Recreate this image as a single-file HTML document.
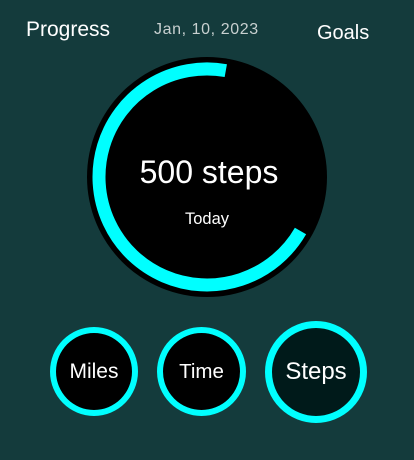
<!DOCTYPE html>
<html><head><style>
body{margin:0;width:414px;height:460px;background:#143b3c;font-family:"Liberation Sans",sans-serif;color:#fff;position:relative;overflow:hidden}
.t{position:absolute;white-space:nowrap}
.c{position:absolute;border-radius:50%;box-sizing:border-box;border:6px solid #00ffff;background:#000;display:flex;align-items:center;justify-content:center;font-size:21px}
</style></head><body>
<div class="t" style="left:26px;top:18px;font-size:21px">Progress</div>
<div class="t" style="left:154px;top:21px;font-size:16px;letter-spacing:0.6px;color:#c8d0d0">Jan, 10, 2023</div>
<div class="t" style="left:317px;top:22px;font-size:20px">Goals</div>
<svg style="position:absolute;left:0;top:0" width="414" height="460">
<circle cx="207" cy="177" r="120" fill="#000"/>
<path d="M225.8 70.6 A108 108 0 1 0 300.5 231" fill="none" stroke="#00ffff" stroke-width="13"/>
<text x="209" y="183" font-size="32" fill="#fff" text-anchor="middle" font-family="Liberation Sans">500 steps</text>
<text x="207" y="224" font-size="16.5" fill="#fff" text-anchor="middle" font-family="Liberation Sans">Today</text>
</svg>
<div class="c" style="left:50px;top:327px;width:88px;height:89px">Miles</div>
<div class="c" style="left:157px;top:327px;width:89px;height:89px;font-size:20.5px">Time</div>
<div class="c" style="left:265px;top:321px;width:102px;height:102px;border-width:7px;background:#001a1a;font-size:24px">Steps</div>
</body></html>
